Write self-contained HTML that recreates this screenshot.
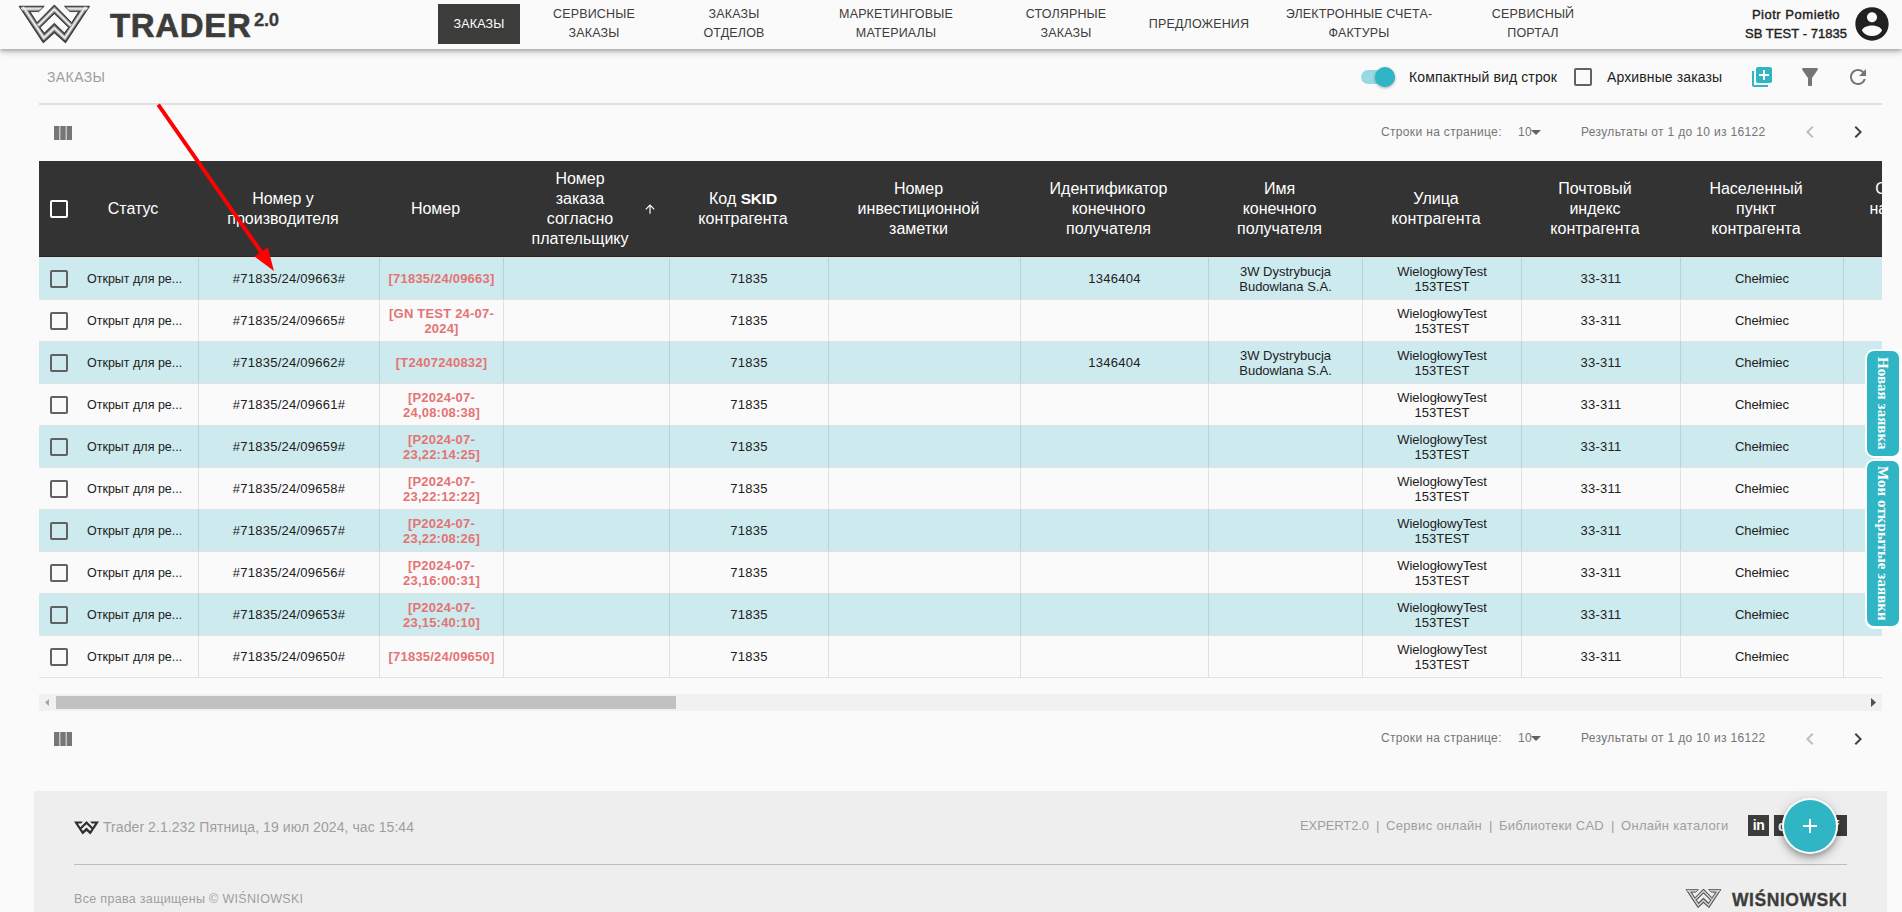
<!DOCTYPE html>
<html lang="ru">
<head>
<meta charset="utf-8">
<title>Trader 2.0 - Заказы</title>
<style>
*{box-sizing:border-box;margin:0;padding:0}
html,body{width:1902px;height:912px;overflow:hidden;background:#fafafa;font-family:"Liberation Sans",sans-serif;color:#212121}
body{position:relative}
.abs{position:absolute}
/* header */
#hdr{position:absolute;left:0;top:0;width:1902px;height:49px;background:#fafafa;box-shadow:0 2px 4px rgba(0,0,0,.28),0 4px 8px rgba(0,0,0,.1);z-index:5}
#trader{position:absolute;left:110px;top:7px;font-size:33px;font-weight:bold;color:#3c3c3b;letter-spacing:.65px;line-height:38px;white-space:nowrap;-webkit-text-stroke:.6px #3c3c3b}
#trader sup{position:absolute;left:144px;top:-6px;font-size:18.5px;letter-spacing:-.3px;-webkit-text-stroke:.3px #3c3c3b}
.nav{position:absolute;top:4px;height:40px;display:flex;align-items:center;justify-content:center;text-align:center;font-size:12.5px;line-height:19px;color:#3c3c3b;letter-spacing:.15px;white-space:nowrap;transform:translateX(-50%)}
.nav.act{background:#3c3c3b;color:#fff;transform:none;left:438px;width:82px;top:4px;padding-bottom:0}
#user{position:absolute;left:1716px;width:160px;top:5px;text-align:center;font-size:13px;font-weight:normal;line-height:19px;color:#212121;-webkit-text-stroke:.4px #212121}
/* toolbar */
#title{position:absolute;left:47px;top:68px;font-size:14px;line-height:18px;color:#9e9e9e;letter-spacing:.4px}
.lbl{position:absolute;top:68px;font-size:14px;line-height:18px;color:#212121;white-space:nowrap;letter-spacing:.12px}
#hr1{position:absolute;left:39px;top:103px;width:1843px;height:2px;background:#e0e0e0}
.pg{position:absolute;font-size:12px;line-height:16px;color:#757575;white-space:nowrap;letter-spacing:.34px}
/* table */
#tw{position:absolute;left:39px;top:161px;width:1843px;height:517px;overflow:hidden;border-bottom:1px solid #e2e2e2}
table{border-collapse:separate;border-spacing:0;table-layout:fixed;width:1930px}
th{background:#333;border-bottom:1px solid #262626;color:#fff;font-weight:normal;font-size:16px;line-height:20px;height:96px;text-align:center;vertical-align:middle;padding:0 17px 0 6px;position:relative}
td{height:42px;font-size:13px;line-height:15px;text-align:center;vertical-align:middle;border-left:1px solid rgba(0,0,0,.1);border-top:1px solid #e2e2e2;padding:0 8px;color:#212121;letter-spacing:.25px}
tr.o td{background:#cdeaee}
td.c,td.s{border-left:none}
td.c{padding:0}
td.l{letter-spacing:0}
th b{font-size:15.5px;letter-spacing:-.2px}
td.s{text-align:left;padding:1px 0 0 8px;letter-spacing:0;font-size:12.5px}
td.n{color:#e57373;font-weight:bold;letter-spacing:.2px}
.cb{display:block;width:18px;height:18px;border:2px solid #616161;border-radius:2px;margin-left:11px}
th .cb{border-color:#fff}
.tab{position:absolute;left:1867px;width:32px;background:#2fb5c4;border-radius:7px;color:#fff;font-family:"Liberation Serif",serif;font-weight:bold;font-size:15px;writing-mode:vertical-rl;text-align:center;line-height:33px;white-space:nowrap;letter-spacing:0.05px}
/* footer */
#ft{position:absolute;left:34px;top:791px;width:1853px;height:121px;background:#eee}
.ftx{position:absolute;color:#9e9e9e;white-space:nowrap}
.fl{top:26px;font-size:13px;line-height:18px}
</style>
</head>
<body>

<div id="hdr">
  <svg class="abs" style="left:10px;top:0" width="100" height="64" viewBox="0 0 1425 912">
    <defs>
      <clipPath id="wc"><path clip-rule="evenodd" d="M128 88H488L410 165H285L385 322 632 70 879 322 979 165H854L776 88H1136L791 612 632 470 473 612ZM430 392 632 195 834 392 775 470 632 330 489 470Z"/></clipPath>
      <filter id="wb" x="-5%" y="-5%" width="110%" height="110%"><feGaussianBlur stdDeviation="7"/></filter>
    </defs>
    <g clip-path="url(#wc)">
      <rect x="100" y="50" width="1080" height="600" fill="#4a4a4a"/>
      <g fill="none" stroke-linejoin="miter" stroke-linecap="butt" filter="url(#wb)">
        <path d="M181 88 482 541 632 400 782 541 1083 88M150 126H460M804 126H1114M400 364 632 132 864 364" stroke="#a9a9a9" stroke-width="52"/>
        <path d="M181 88 482 541 632 400 782 541 1083 88M150 126H460M804 126H1114M400 364 632 132 864 364" stroke="#f4f4f4" stroke-width="20"/>
      </g>
    </g>
    <path fill="none" stroke="#111" stroke-width="9" stroke-linejoin="miter" d="M128 88H488L410 165H285L385 322 632 70 879 322 979 165H854L776 88H1136L791 612 632 470 473 612ZM430 392 632 195 834 392 775 470 632 330 489 470Z"/>
  </svg>
  <div id="trader">TRADER<sup>2.0</sup></div>

  <div class="nav act">ЗАКАЗЫ</div>
  <div class="nav" style="left:594px">СЕРВИСНЫЕ<br>ЗАКАЗЫ</div>
  <div class="nav" style="left:734px">ЗАКАЗЫ<br>ОТДЕЛОВ</div>
  <div class="nav" style="left:896px">МАРКЕТИНГОВЫЕ<br>МАТЕРИАЛЫ</div>
  <div class="nav" style="left:1066px">СТОЛЯРНЫЕ<br>ЗАКАЗЫ</div>
  <div class="nav" style="left:1199px">ПРЕДЛОЖЕНИЯ</div>
  <div class="nav" style="left:1359px">ЭЛЕКТРОННЫЕ СЧЕТА-<br>ФАКТУРЫ</div>
  <div class="nav" style="left:1533px">СЕРВИСНЫЙ<br>ПОРТАЛ</div>

  <div id="user"><span style="letter-spacing:.52px">Piotr Pomietło</span><br><span style="letter-spacing:.05px">SB TEST - 71835</span></div>
  <svg class="abs" style="left:1852px;top:4px" width="40" height="40" viewBox="0 0 24 24"><path fill="#212121" d="M12 2C6.48 2 2 6.48 2 12s4.48 10 10 10 10-4.480 10-10S17.520 2 12 2zm0 3c1.660 0 3 1.340 3 3s-1.340 3-3 3-3-1.340-3-3 1.340-3 3-3zm0 14.200c-2.500 0-4.710-1.280-6-3.220.030-1.990 4-3.080 6-3.080 1.990 0 5.970 1.090 6 3.080-1.290 1.940-3.500 3.220-6 3.220z"/></svg>
</div>

<!-- toolbar -->
<div id="title">ЗАКАЗЫ</div>
<div class="abs" style="left:1361px;top:70px;width:34px;height:14px;border-radius:7px;background:#97dae2"></div>
<div class="abs" style="left:1375px;top:67px;width:20px;height:20px;border-radius:50%;background:#2fb5c4;box-shadow:0 1px 3px rgba(0,0,0,.35)"></div>
<div class="lbl" style="left:1409px">Компактный вид строк</div>
<div class="abs" style="left:1574px;top:68px;width:18px;height:18px;border:2px solid #616161;border-radius:2px"></div>
<div class="lbl" style="left:1607px">Архивные заказы</div>
<svg class="abs" style="left:1750px;top:65px" width="24" height="24" viewBox="0 0 24 24"><path fill="#2fb5c4" d="M4 6H2v14c0 1.100.9 2 2 2h14v-2H4V6zm16-4H8c-1.100 0-2 .9-2 2v12c0 1.100.9 2 2 2h12c1.100 0 2-.9 2-2V4c0-1.100-.9-2-2-2zm-1 9h-4v4h-2v-4H9V9h4V5h2v4h4v2z"/></svg>
<svg class="abs" style="left:1798px;top:65px;transform:scaleY(1.13)" width="24" height="24" viewBox="0 0 24 24"><path fill="#757575" d="M4.250 5.610C6.270 8.200 10 13 10 13v6c0 .55.45 1 1 1h2c.55 0 1-.45 1-1v-6s3.720-4.800 5.740-7.390A.998.998 0 0 0 18.950 4H5.040a1 1 0 0 0-.79 1.610z"/></svg>
<svg class="abs" style="left:1846px;top:65px" width="24" height="24" viewBox="0 0 24 24"><path fill="#757575" d="M17.650 6.350A7.958 7.958 0 0 0 12 4c-4.420 0-7.990 3.580-7.990 8s3.570 8 7.990 8c3.730 0 6.840-2.550 7.730-6h-2.080A5.990 5.990 0 0 1 12 18c-3.310 0-6-2.690-6-6s2.690-6 6-6c1.660 0 3.140.69 4.220 1.780L13 11h7V4l-2.350 2.350z"/></svg>
<div id="hr1"></div>

<!-- top pager -->
<svg class="abs" style="left:54px;top:126px" width="18" height="14" viewBox="0 0 18 14"><path fill="#767676" d="M0 0h5.400v14H0zM6.300 0h5.400v14h-5.400zM12.600 0h5.400v14h-5.400z"/></svg>
<div class="pg" style="left:1381px;top:124px">Строки на странице:</div>
<div class="pg" style="left:1518px;top:124px">10</div>
<svg class="abs" style="left:1531px;top:130px" width="10" height="5" viewBox="0 0 10 5"><path fill="#616161" d="M0 0h10L5 5z"/></svg>
<div class="pg" style="left:1581px;top:124px">Результаты от 1 до 10 из 16122</div>
<svg class="abs" style="left:1798px;top:120px" width="24" height="24" viewBox="0 0 24 24"><path fill="#bdbdbd" d="M15.410 7.410 14 6l-6 6 6 6 1.410-1.410L10.830 12z"/></svg>
<svg class="abs" style="left:1846px;top:120px" width="24" height="24" viewBox="0 0 24 24"><path fill="#424242" d="M10 6 8.590 7.410 13.170 12l-4.580 4.590L10 18l6-6z"/></svg>

<!-- table -->
<div id="tw">
<table>
<colgroup><col style="width:40px"><col style="width:119px"><col style="width:181px"><col style="width:124px"><col style="width:166px"><col style="width:159px"><col style="width:192px"><col style="width:188px"><col style="width:154px"><col style="width:159px"><col style="width:159px"><col style="width:163px"><col style="width:126px"></colgroup>
<thead><tr>
<th style="padding:0"><span class="cb"></span></th>
<th>Статус</th>
<th>Номер у<br>производителя</th>
<th>Номер</th>
<th style="padding:0 38px 0 26px">Номер<br>заказа<br>согласно<br>плательщику<svg class="abs" style="right:12px;top:41px" width="14" height="14" viewBox="0 0 24 24"><path fill="#fff" d="M4 12l1.410 1.410L11 7.830V20h2V7.830l5.580 5.590L20 12l-8-8-8 8z"/></svg></th>
<th>Код <b>SKID</b><br>контрагента</th>
<th>Номер<br>инвестиционной<br>заметки</th>
<th>Идентификатор<br>конечного<br>получателя</th>
<th>Имя<br>конечного<br>получателя</th>
<th>Улица<br>контрагента</th>
<th>Почтовый<br>индекс<br>контрагента</th>
<th>Населенный<br>пункт<br>контрагента</th>
<th>Статус<br>наличия<br>цены</th>
</tr></thead>
<tbody>
<tr class="o"><td class="c"><span class="cb"></span></td><td class="s">Открыт для ре...</td><td>#71835/24/09663#</td><td class="n">[71835/24/09663]</td><td></td><td>71835</td><td></td><td>1346404</td><td class="l">3W Dystrybucja Budowlana S.A.</td><td class="l">WielogłowyTest 153TEST</td><td>33-311</td><td class="l">Chełmiec</td><td></td></tr>
<tr><td class="c"><span class="cb"></span></td><td class="s">Открыт для ре...</td><td>#71835/24/09665#</td><td class="n">[GN TEST 24-07-2024]</td><td></td><td>71835</td><td></td><td></td><td></td><td class="l">WielogłowyTest 153TEST</td><td>33-311</td><td class="l">Chełmiec</td><td></td></tr>
<tr class="o"><td class="c"><span class="cb"></span></td><td class="s">Открыт для ре...</td><td>#71835/24/09662#</td><td class="n">[T2407240832]</td><td></td><td>71835</td><td></td><td>1346404</td><td class="l">3W Dystrybucja Budowlana S.A.</td><td class="l">WielogłowyTest 153TEST</td><td>33-311</td><td class="l">Chełmiec</td><td></td></tr>
<tr><td class="c"><span class="cb"></span></td><td class="s">Открыт для ре...</td><td>#71835/24/09661#</td><td class="n">[P2024-07-24,08:08:38]</td><td></td><td>71835</td><td></td><td></td><td></td><td class="l">WielogłowyTest 153TEST</td><td>33-311</td><td class="l">Chełmiec</td><td></td></tr>
<tr class="o"><td class="c"><span class="cb"></span></td><td class="s">Открыт для ре...</td><td>#71835/24/09659#</td><td class="n">[P2024-07-23,22:14:25]</td><td></td><td>71835</td><td></td><td></td><td></td><td class="l">WielogłowyTest 153TEST</td><td>33-311</td><td class="l">Chełmiec</td><td></td></tr>
<tr><td class="c"><span class="cb"></span></td><td class="s">Открыт для ре...</td><td>#71835/24/09658#</td><td class="n">[P2024-07-23,22:12:22]</td><td></td><td>71835</td><td></td><td></td><td></td><td class="l">WielogłowyTest 153TEST</td><td>33-311</td><td class="l">Chełmiec</td><td></td></tr>
<tr class="o"><td class="c"><span class="cb"></span></td><td class="s">Открыт для ре...</td><td>#71835/24/09657#</td><td class="n">[P2024-07-23,22:08:26]</td><td></td><td>71835</td><td></td><td></td><td></td><td class="l">WielogłowyTest 153TEST</td><td>33-311</td><td class="l">Chełmiec</td><td></td></tr>
<tr><td class="c"><span class="cb"></span></td><td class="s">Открыт для ре...</td><td>#71835/24/09656#</td><td class="n">[P2024-07-23,16:00:31]</td><td></td><td>71835</td><td></td><td></td><td></td><td class="l">WielogłowyTest 153TEST</td><td>33-311</td><td class="l">Chełmiec</td><td></td></tr>
<tr class="o"><td class="c"><span class="cb"></span></td><td class="s">Открыт для ре...</td><td>#71835/24/09653#</td><td class="n">[P2024-07-23,15:40:10]</td><td></td><td>71835</td><td></td><td></td><td></td><td class="l">WielogłowyTest 153TEST</td><td>33-311</td><td class="l">Chełmiec</td><td></td></tr>
<tr><td class="c"><span class="cb"></span></td><td class="s">Открыт для ре...</td><td>#71835/24/09650#</td><td class="n">[71835/24/09650]</td><td></td><td>71835</td><td></td><td></td><td></td><td class="l">WielogłowyTest 153TEST</td><td>33-311</td><td class="l">Chełmiec</td><td></td></tr>
</tbody>
</table>
</div>

<!-- horizontal scrollbar -->
<div class="abs" style="left:39px;top:694px;width:1843px;height:17px;background:#f1f1f1"></div>
<div class="abs" style="left:56px;top:696px;width:620px;height:13px;background:#c1c1c1"></div>
<svg class="abs" style="left:45px;top:699px" width="4" height="7" viewBox="0 0 5 9"><path fill="#a3a3a3" d="M5 0v9L0 4.500z"/></svg>
<svg class="abs" style="left:1871px;top:698px" width="5" height="9" viewBox="0 0 5 9"><path fill="#505050" d="M0 0v9l5-4.500z"/></svg>

<!-- bottom pager -->
<svg class="abs" style="left:54px;top:732px" width="18" height="14" viewBox="0 0 18 14"><path fill="#767676" d="M0 0h5.400v14H0zM6.300 0h5.400v14h-5.400zM12.600 0h5.400v14h-5.400z"/></svg>
<div class="pg" style="left:1381px;top:730px">Строки на странице:</div>
<div class="pg" style="left:1518px;top:730px">10</div>
<svg class="abs" style="left:1531px;top:736px" width="10" height="5" viewBox="0 0 10 5"><path fill="#616161" d="M0 0h10L5 5z"/></svg>
<div class="pg" style="left:1581px;top:730px">Результаты от 1 до 10 из 16122</div>
<svg class="abs" style="left:1798px;top:727px" width="24" height="24" viewBox="0 0 24 24"><path fill="#bdbdbd" d="M15.410 7.410 14 6l-6 6 6 6 1.410-1.410L10.830 12z"/></svg>
<svg class="abs" style="left:1846px;top:727px" width="24" height="24" viewBox="0 0 24 24"><path fill="#424242" d="M10 6 8.590 7.410 13.170 12l-4.580 4.590L10 18l6-6z"/></svg>

<!-- side tabs -->
<div class="abs" style="left:1865px;top:349px;width:37px;height:109px;background:#fff;border-radius:9px 0 0 9px"></div>
<div class="tab" style="top:351px;height:105px">Новая заявка</div>
<div class="abs" style="left:1865px;top:459px;width:37px;height:170px;background:#fff;border-radius:9px 0 0 9px"></div>
<div class="tab" style="top:461px;height:165px">Мои открытые заявки</div>

<!-- footer -->
<div id="ft">
  <svg class="abs" style="left:40px;top:30px" width="25" height="13.500" viewBox="128 70 1008 542"><path fill="#2f2f2f" fill-rule="evenodd" d="M128 88H488L410 165H285L385 322 632 70 879 322 979 165H854L776 88H1136L791 612 632 470 473 612ZM430 392 632 195 834 392 775 470 632 330 489 470Z"/></svg>
  <div class="ftx" style="left:69px;top:27px;font-size:14px;line-height:18px;letter-spacing:.07px">Trader 2.1.232 Пятница, 19 июл 2024, час 15:44</div>
  <div class="ftx fl" style="left:1266px;letter-spacing:-.1px">EXPERT2.0</div>
  <div class="ftx fl" style="left:1342px">|</div>
  <div class="ftx fl" style="left:1352px;letter-spacing:.33px">Сервис онлайн</div>
  <div class="ftx fl" style="left:1455px">|</div>
  <div class="ftx fl" style="left:1465px;letter-spacing:.25px">Библиотеки CAD</div>
  <div class="ftx fl" style="left:1577px">|</div>
  <div class="ftx fl" style="left:1587px;letter-spacing:.3px">Онлайн каталоги</div>
  <div class="abs" style="left:1714px;top:24px;width:21px;height:21px;background:#3c3c3b;color:#fff;font-size:14px;font-weight:bold;line-height:21px;text-align:center;letter-spacing:-.5px">in</div>
  <div class="abs" style="left:1740px;top:24px;width:21px;height:21px;background:#3c3c3b;color:#fff;font-size:15px;font-weight:bold;line-height:21px;padding-left:4px">d</div>
  <div class="abs" style="left:1766px;top:24px;width:21px;height:21px;background:#3c3c3b"></div>
  <div class="abs" style="left:1792px;top:24px;width:21px;height:21px;background:#3c3c3b;color:#fff;font-size:15px;font-weight:bold;line-height:21px;text-align:center">f</div>
  <div class="abs" style="left:40px;top:73px;width:1773px;height:1px;background:#bdbdbd"></div>
  <div class="ftx" style="left:40px;top:100px;font-size:12.5px;line-height:16px;letter-spacing:.32px">Все права защищены © WIŚNIOWSKI</div>
  <svg class="abs" style="left:1651px;top:97px" width="37" height="21" viewBox="100 50 1064 590">
    <defs><clipPath id="wc2"><path clip-rule="evenodd" d="M128 88H488L410 165H285L385 322 632 70 879 322 979 165H854L776 88H1136L791 612 632 470 473 612ZM430 392 632 195 834 392 775 470 632 330 489 470Z"/></clipPath></defs>
    <g clip-path="url(#wc2)"><rect x="100" y="50" width="1080" height="600" fill="#4a4a4a"/>
      <path fill="none" d="M181 88 482 541 632 400 782 541 1083 88M150 126H460M804 126H1114M400 364 632 132 864 364" stroke="#b5b5b5" stroke-width="50"/>
      <path fill="none" d="M181 88 482 541 632 400 782 541 1083 88M150 126H460M804 126H1114M400 364 632 132 864 364" stroke="#f4f4f4" stroke-width="18"/>
    </g>
    <path fill="none" stroke="#3a3a3a" stroke-width="14" d="M128 88H488L410 165H285L385 322 632 70 879 322 979 165H854L776 88H1136L791 612 632 470 473 612ZM430 392 632 195 834 392 775 470 632 330 489 470Z"/>
  </svg>
  <div class="abs" style="left:1698px;top:97px;font-size:17.5px;font-weight:bold;line-height:24px;color:#3c3c3b;letter-spacing:.55px;-webkit-text-stroke:.3px #3c3c3b;white-space:nowrap">WIŚNIOWSKI</div>
</div>

<!-- FAB -->
<div class="abs" style="left:1782px;top:798px;width:56px;height:56px;border-radius:50%;background:#fff;box-shadow:0 3px 5px rgba(0,0,0,.2),0 6px 10px rgba(0,0,0,.14),0 1px 14px rgba(0,0,0,.1)"></div>
<div class="abs" style="left:1784px;top:800px;width:52px;height:52px;border-radius:50%;background:#2fb5c4"></div>
<svg class="abs" style="left:1803px;top:819px" width="14" height="14" viewBox="0 0 14 14"><path fill="#fff" d="M6 0h2v6h6v2H8v6H6V8H0V6h6z"/></svg>

<!-- red annotation arrow -->
<svg class="abs" style="left:0;top:0;z-index:9;pointer-events:none" width="1902" height="912" viewBox="0 0 1902 912"><path d="M158.200 104.600 264 256" stroke="#ff0000" stroke-width="3.900" fill="none"/><path d="M274 271 254.400 256.600 267.700 247.300z" fill="#ff0000"/></svg>

</body>
</html>
